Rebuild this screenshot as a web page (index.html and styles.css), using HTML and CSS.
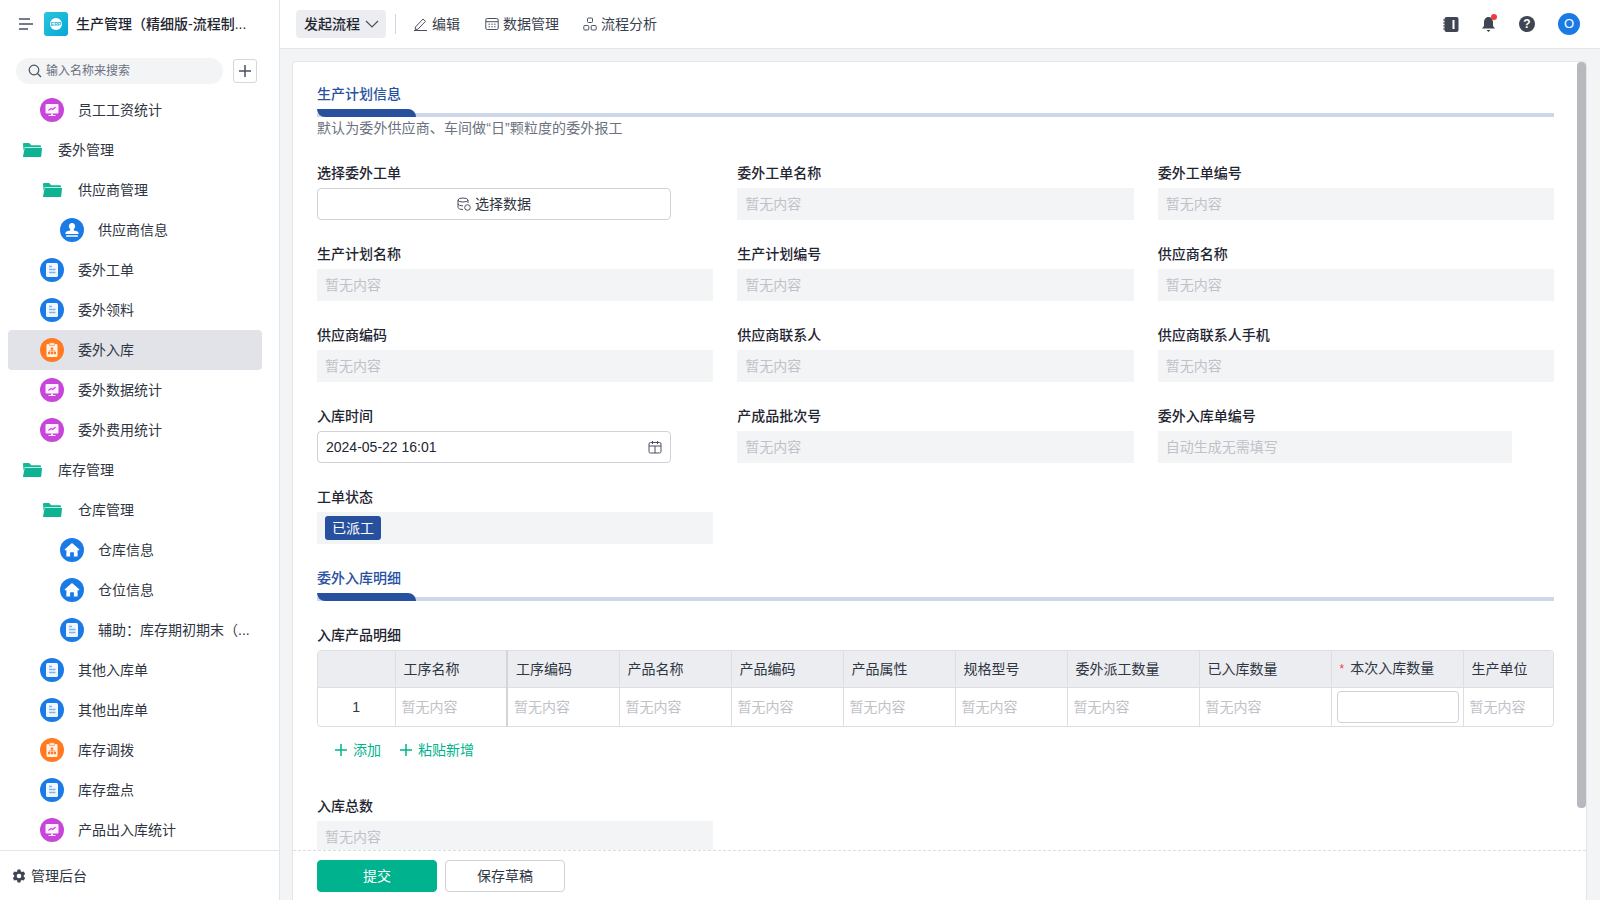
FILE: index.html
```html
<!DOCTYPE html>
<html lang="zh-CN">
<head>
<meta charset="utf-8">
<title>委外入库</title>
<link rel="stylesheet" href="styles.css">
</head>
<body>
<svg class="defs" width="0" height="0" aria-hidden="true">
  <defs>
    <symbol id="i-doc" viewBox="0 0 24 24"><circle cx="12" cy="12" r="12" fill="#1b7be6"/><rect x="6" y="5" width="12" height="14" rx="1.500" fill="#f2f7fe"/><path d="M9 8.500h3M9 11.500h6.500M9 14.500h6.500" stroke="#7fb2f1" stroke-width="1.600"/></symbol>
    <symbol id="i-chart" viewBox="0 0 24 24"><circle cx="12" cy="12" r="12" fill="#c746d9"/><rect x="5.500" y="6" width="13" height="9.500" rx="1" fill="#fbf1fd"/><path d="M8.500 12.500l2.500-2 1.600 1 3-2.500" fill="none" stroke="#c746d9" stroke-width="1.100"/><path d="M11 15.500h2v1.600h2.500v1h-7v-1H11z" fill="#fbf1fd"/></symbol>
    <symbol id="i-clip" viewBox="0 0 24 24"><circle cx="12" cy="12" r="12" fill="#ff7a21"/><rect x="6.500" y="6" width="11" height="13" rx="1.200" fill="#fff3ea"/><rect x="9.300" y="4.800" width="5.400" height="2.600" rx=".6" fill="#fff3ea" stroke="#ff7a21" stroke-width=".7"/><path d="M10.800 9.500h2.400v2.200h-2.400zM8 14h2.200v2.200H8zM10.900 14h2.200v2.200h-2.200zM13.800 14H16v2.200h-2.200z" fill="#ff7a21"/><path d="M12 11.500v2.500M9.100 14v-1.200h5.800V14" fill="none" stroke="#ff7a21" stroke-width=".7"/></symbol>
    <symbol id="i-stamp" viewBox="0 0 24 24"><circle cx="12" cy="12" r="12" fill="#1b7be6"/><path d="M12 5a3.200 3.200 0 0 1 2 5.700c-.4.400-.4 1.600.3 1.900l3.200.9c.7.200 1 .7 1 1.300V16H5.500v-1.200c0-.6.300-1.100 1-1.300l3.200-.9c.7-.3.700-1.500.3-1.900A3.200 3.200 0 0 1 12 5z" fill="#fff"/><rect x="6" y="17.200" width="12" height="1.600" rx=".5" fill="#fff"/></symbol>
    <symbol id="i-home" viewBox="0 0 24 24"><circle cx="12" cy="12" r="12" fill="#1b7be6"/><path d="M12 5l7.500 6.500-1 1.100-.9-.7V18.500h-3.700v-4.300h-3.800v4.300H6.400v-6.600l-.9.7-1-1.100z" fill="#fff"/></symbol>
    <symbol id="i-folder" viewBox="0 0 20 16"><path d="M1 2.200C1 1.500 1.500 1 2.200 1h5l2 2.200h8.600c.7 0 1.200.5 1.200 1.200V5H2.800L1.600 9z" fill="#12b897"/><path d="M2.700 5.800H19.500c.3 0 .5.200.5.500l-.8 8.200c-.1.300-.3.500-.7.500H1.500c-.4 0-.6-.3-.5-.6z" fill="#0fb392"/></symbol>
  </defs>
</svg>
<div class="app">
  <aside class="sidebar">
    <div class="brand">
      <svg class="ham" width="14" height="12" viewBox="0 0 14 12"><path d="M0 1h11M0 6h14M0 11h9" stroke="#4a5060" stroke-width="1.500"/></svg>
      <span class="logo"><span class="logo-dot">ERP</span></span>
      <span class="brand-name">生产管理（精细版-流程制...</span>
    </div>
    <div class="search-row">
      <div class="search">
        <svg width="14" height="14" viewBox="0 0 14 14"><circle cx="6" cy="6" r="4.800" fill="none" stroke="#4a5060" stroke-width="1.200"/><path d="M9.500 9.500L13 13" stroke="#4a5060" stroke-width="1.200"/></svg>
        <span>输入名称来搜索</span>
      </div>
      <span class="add-btn"><svg width="14" height="14" viewBox="0 0 14 14"><path d="M7 1v12M1 7h12" stroke="#4a5060" stroke-width="1.500"/></svg></span>
    </div>
    <nav class="tree">
      <div class="item l1"><svg class="ico"><use href="#i-chart"/></svg><span>员工工资统计</span></div>
      <div class="item l0"><svg class="fold"><use href="#i-folder"/></svg><span>委外管理</span></div>
      <div class="item l1f"><svg class="fold"><use href="#i-folder"/></svg><span>供应商管理</span></div>
      <div class="item l2"><svg class="ico"><use href="#i-stamp"/></svg><span>供应商信息</span></div>
      <div class="item l1"><svg class="ico"><use href="#i-doc"/></svg><span>委外工单</span></div>
      <div class="item l1"><svg class="ico"><use href="#i-doc"/></svg><span>委外领料</span></div>
      <div class="item l1 active"><svg class="ico"><use href="#i-clip"/></svg><span>委外入库</span></div>
      <div class="item l1"><svg class="ico"><use href="#i-chart"/></svg><span>委外数据统计</span></div>
      <div class="item l1"><svg class="ico"><use href="#i-chart"/></svg><span>委外费用统计</span></div>
      <div class="item l0"><svg class="fold"><use href="#i-folder"/></svg><span>库存管理</span></div>
      <div class="item l1f"><svg class="fold"><use href="#i-folder"/></svg><span>仓库管理</span></div>
      <div class="item l2"><svg class="ico"><use href="#i-home"/></svg><span>仓库信息</span></div>
      <div class="item l2"><svg class="ico"><use href="#i-home"/></svg><span>仓位信息</span></div>
      <div class="item l2"><svg class="ico"><use href="#i-doc"/></svg><span>辅助：库存期初期末（...</span></div>
      <div class="item l1"><svg class="ico"><use href="#i-doc"/></svg><span>其他入库单</span></div>
      <div class="item l1"><svg class="ico"><use href="#i-doc"/></svg><span>其他出库单</span></div>
      <div class="item l1"><svg class="ico"><use href="#i-clip"/></svg><span>库存调拨</span></div>
      <div class="item l1"><svg class="ico"><use href="#i-doc"/></svg><span>库存盘点</span></div>
      <div class="item l1"><svg class="ico"><use href="#i-chart"/></svg><span>产品出入库统计</span></div>
    </nav>
    <div class="admin">
      <svg width="14" height="14" viewBox="0 0 24 24"><path fill="#3f4552" fill-rule="evenodd" d="M9.500 1h5l.7 3.200 1.800 1 3.100-1 2.500 4.300-2.400 2.200v2.600l2.400 2.200-2.500 4.300-3.100-1-1.800 1-.7 3.200h-5l-.7-3.200-1.800-1-3.100 1-2.500-4.300 2.400-2.200v-2.600L1.400 8.500l2.500-4.300 3.100 1 1.800-1zM12 8a4 4 0 1 0 0 8 4 4 0 0 0 0-8z"/></svg>
      <span>管理后台</span>
    </div>
  </aside>
  <main class="main">
    <header class="topbar">
      <div class="flow-btn"><span>发起流程</span><svg width="14" height="8" viewBox="0 0 14 8"><path d="M1 1l6 6 6-6" fill="none" stroke="#4a5060" stroke-width="1.200"/></svg></div>
      <span class="vline"></span>
      <div class="tool edit"><svg width="14" height="14" viewBox="0 0 14 14"><path d="M1.500 10l7.500-8 2.500 2.300-7.600 7.900-2.700.3zM0 13.500h13" fill="none" stroke="#4a5060" stroke-width="1"/></svg><span>编辑</span></div>
      <div class="tool data"><svg width="14" height="14" viewBox="0 0 14 14"><rect x=".8" y="1.500" width="12.400" height="11" rx="1.500" fill="none" stroke="#4a5060"/><path d="M1 4.700h12M3.500 7.200h1.500M6.300 7.200h1.500M9.100 7.200h1.500M3.500 9.800h1.500M6.300 9.800h1.500M9.100 9.800h1.500" stroke="#4a5060"/></svg><span>数据管理</span></div>
      <div class="tool flow"><svg width="14" height="14" viewBox="0 0 14 14"><rect x="4.500" y="1" width="5" height="4.500" rx="1" fill="none" stroke="#4a5060"/><rect x=".8" y="8.500" width="5" height="4.500" rx="1" fill="none" stroke="#4a5060"/><rect x="8.200" y="8.500" width="5" height="4.500" rx="1" fill="none" stroke="#4a5060"/></svg><span>流程分析</span></div>
      <div class="top-right">
        <svg class="tr-note" width="16" height="15" viewBox="0 0 16 15"><rect x="1.500" width="14" height="15" rx="2" fill="#3f4552"/><rect x="9.500" y="3" width="2" height="9" fill="#fff"/><path d="M0 3h2M0 6h2M0 9h2M0 12h2" stroke="#3f4552"/></svg>
        <span class="bell"><svg width="13" height="16" viewBox="0 0 13 16"><path d="M6.500 1C9.500 1 11 3.500 11 6.500v3.500l2 2.500H0l2-2.500V6.500C2 3.500 3.500 1 6.500 1z" fill="#3f4552"/><path d="M4.500 14h4l-2 2z" fill="#3f4552"/></svg><i class="dot"></i></span>
        <span class="help">?</span>
        <span class="avatar">O</span>
      </div>
    </header>
    <div class="content">
      <section class="card">
        <div class="scroll-thumb"></div>
        <div class="form">
          <h2 class="sec-title">生产计划信息</h2>
          <div class="bar"><span class="bar-accent"></span></div>
          <p class="desc">默认为委外供应商、车间做“日”颗粒度的委外报工</p>
          <div class="grid">
            <div class="field"><label>选择委外工单</label><div class="pick"><svg width="14" height="14" viewBox="0 0 14 14"><ellipse cx="6" cy="3" rx="5" ry="2" fill="none" stroke="#4a5060"/><path d="M1 3v7.500c0 1 2 2 5 2M11 3v3M1 6.800c0 1 2 2 5 2" fill="none" stroke="#4a5060"/><circle cx="10.500" cy="10.500" r="2.800" fill="none" stroke="#4a5060"/></svg><span>选择数据</span></div></div>
            <div class="field"><label>委外工单名称</label><div class="ro">暂无内容</div></div>
            <div class="field"><label>委外工单编号</label><div class="ro">暂无内容</div></div>
            <div class="field"><label>生产计划名称</label><div class="ro">暂无内容</div></div>
            <div class="field"><label>生产计划编号</label><div class="ro">暂无内容</div></div>
            <div class="field"><label>供应商名称</label><div class="ro">暂无内容</div></div>
            <div class="field"><label>供应商编码</label><div class="ro">暂无内容</div></div>
            <div class="field"><label>供应商联系人</label><div class="ro">暂无内容</div></div>
            <div class="field"><label>供应商联系人手机</label><div class="ro">暂无内容</div></div>
            <div class="field"><label>入库时间</label><div class="date"><span>2024-05-22 16:01</span><svg width="14" height="14" viewBox="0 0 14 14"><rect x="1" y="2.500" width="12" height="10.500" rx="1.500" fill="none" stroke="#4a5060"/><path d="M1 6h12M4.500 1v3M9.500 1v3M7 6v7" stroke="#4a5060"/></svg></div></div>
            <div class="field"><label>产成品批次号</label><div class="ro">暂无内容</div></div>
            <div class="field"><label>委外入库单编号</label><div class="ro short">自动生成无需填写</div></div>
            <div class="field"><label>工单状态</label><div class="ro tagbox"><span class="tag">已派工</span></div></div>
          </div>
          <h2 class="sec-title second">委外入库明细</h2>
          <div class="bar"><span class="bar-accent"></span></div>
          <label class="tbl-label">入库产品明细</label>
          <div class="tbl-wrap">
            <table class="tbl">
              <colgroup>
                <col class="c-idx"><col class="c-m"><col class="c-m"><col class="c-m"><col class="c-m"><col class="c-m"><col class="c-m"><col class="c-l"><col class="c-l"><col class="c-l"><col class="c-s">
              </colgroup>
              <thead>
                <tr><th></th><th class="thick">工序名称</th><th>工序编码</th><th>产品名称</th><th>产品编码</th><th>产品属性</th><th>规格型号</th><th>委外派工数量</th><th>已入库数量</th><th><em>*</em>本次入库数量</th><th>生产单位</th></tr>
              </thead>
              <tbody>
                <tr><td class="idx">1</td><td class="thick">暂无内容</td><td>暂无内容</td><td>暂无内容</td><td>暂无内容</td><td>暂无内容</td><td>暂无内容</td><td>暂无内容</td><td>暂无内容</td><td class="inp"><span class="cell-input"></span></td><td>暂无内容</td></tr>
              </tbody>
            </table>
          </div>
          <div class="actions">
            <span class="act"><svg width="12" height="12" viewBox="0 0 12 12"><path d="M6 0v12M0 6h12" stroke="#00b38e" stroke-width="1.500"/></svg>添加</span>
            <span class="act"><svg width="12" height="12" viewBox="0 0 12 12"><path d="M6 0v12M0 6h12" stroke="#00b38e" stroke-width="1.500"/></svg>粘贴新增</span>
          </div>
          <div class="field total"><label>入库总数</label><div class="ro">暂无内容</div></div>
        </div>
        <footer class="foot">
          <span class="btn primary">提交</span>
          <span class="btn">保存草稿</span>
        </footer>
      </section>
    </div>
  </main>
</div>
</body>
</html>
```

FILE: styles.css
```css
* { box-sizing: border-box; }
html, body { margin: 0; height: 100%; overflow: hidden; }
body {
  font-family: "Liberation Sans", "Noto Sans CJK SC", sans-serif;
  font-size: 14px;
  line-height: 22px;
  color: #2a303c;
  background: #f3f4f6;
}
.defs { position: absolute; }
.app { display: flex; height: 900px; }

/* sidebar */
.sidebar {
  width: 280px;
  flex: none;
  display: flex;
  flex-direction: column;
  background: #fff;
  border-right: 1px solid #e3e5e9;
}
.brand { height: 48px; display: flex; align-items: center; padding-left: 19px; flex: none; }
.ham { flex: none; }
.logo {
  width: 24px; height: 24px; margin-left: 11px; border-radius: 3px;
  background: linear-gradient(135deg, #2ac4dc, #05a8d8);
  display: flex; align-items: center; justify-content: center; flex: none;
}
.logo-dot {
  width: 12px; height: 12px; border-radius: 50%; background: #fff; color: #14b2d8;
  font-size: 5px; line-height: 12px; text-align: center; font-weight: 700;
}
.brand-name { margin-left: 8px; font-weight: 500; color: #1f2531; white-space: nowrap; }
.search-row { display: flex; align-items: center; padding: 4px 0 0 16px; height: 42px; flex: none; }
.search {
  width: 207px; height: 26px; border-radius: 13px; background: #f3f4f6;
  display: flex; align-items: center; gap: 4px; padding-left: 12px;
  font-size: 12px; color: #6b7180;
}
.add-btn {
  width: 24px; height: 24px; margin-left: 10px; border: 1px solid #d5d7dc; border-radius: 3px;
  display: flex; align-items: center; justify-content: center;
}
.tree { flex: 1; overflow: hidden; }
.item { height: 40px; display: flex; align-items: center; color: #2f3542; white-space: nowrap; }
.ico { width: 24px; height: 24px; flex: none; margin-right: 14px; }
.fold { width: 20px; height: 16px; flex: none; margin-right: 16px; }
.l0 { padding-left: 22px; }
.l1f { padding-left: 42px; }
.l1 { padding-left: 40px; }
.l2 { padding-left: 60px; }
.active { margin: 0 17px 0 8px; padding-left: 32px; background: #e1e3e8; border-radius: 4px; }
.admin {
  height: 50px; flex: none; border-top: 1px solid #e3e5e9;
  display: flex; align-items: center; gap: 5px; padding: 0 0 0 12px; color: #2f3542;
}

/* main */
.main { flex: 1; min-width: 0; display: flex; flex-direction: column; }
.topbar {
  height: 49px; flex: none; background: #fff; border-bottom: 1px solid #e3e5e9;
  display: flex; align-items: center; padding-left: 16px;
}
.flow-btn {
  width: 90px; height: 28px; background: #ebedf0; border-radius: 4px;
  display: flex; align-items: center; gap: 5px; padding-left: 8px;
  font-weight: 500; color: #1f2531;
}
.vline { width: 1px; height: 20px; background: #d5d7dc; margin: 0 18px 0 9px; }
.tool { display: flex; align-items: center; gap: 4px; color: #3a404d; }
.edit { margin-right: 25px; }
.data { margin-right: 24px; }
.top-right { margin-left: auto; display: flex; align-items: center; padding-right: 20px; }
.bell { position: relative; display: flex; margin-left: 23px; }
.dot { position: absolute; top: -2px; right: -2px; width: 6px; height: 6px; border-radius: 50%; background: #ef3b3b; }
.help {
  width: 16px; height: 16px; margin-left: 24px; border-radius: 50%; background: #3f4552; color: #fff;
  font-size: 12px; font-weight: 700; line-height: 16px; text-align: center;
}
.avatar {
  width: 22px; height: 22px; margin-left: 23px; border-radius: 50%; background: #1b7be6; color: #fff;
  font-size: 13px; line-height: 22px; text-align: center;
}

/* card */
.content { flex: 1; min-height: 0; padding: 12px 13px 0 12px; display: flex; }
.card {
  position: relative; flex: 1; min-width: 0; background: #fff;
  border: 1px solid #e3e5e9; border-bottom: 0; border-radius: 4px 4px 0 0;
  display: flex; flex-direction: column; overflow: hidden;
}
.scroll-thumb {
  position: absolute; top: 0; right: 0; width: 9px; height: 746px;
  background: #b8b9be; border-radius: 4px;
}
.form { flex: 1; min-height: 0; overflow: hidden; padding: 21px 32px 0 24px; }
.sec-title { margin: 0; font-size: 14px; font-weight: 500; color: #27519f; line-height: 22px; }
.sec-title.second { margin-top: 23px; }
.bar {
  height: 8px; margin-top: 4px; display: block;
  background: linear-gradient(transparent 4px, #cdd7ea 4px);
}
.bar-accent { display: block; width: 99px; height: 8px; background: #27519f; border-radius: 0 8px 0 8px; }
.desc { margin: 0; color: #6b7280; letter-spacing: .1px; }
.grid { display: grid; grid-template-columns: repeat(3, 1fr); column-gap: 24px; row-gap: 23px; margin-top: 23px; }
.field { min-width: 0; }
.field label, .tbl-label { display: block; font-weight: 500; color: #1f2531; margin-bottom: 4px; }
.ro { height: 32px; background: #f3f4f6; color: #c0c2c8; line-height: 32px; padding-left: 8px; }
.short { width: 354px; }
.pick, .date {
  width: 354px; height: 32px; border: 1px solid #d0d2d7; border-radius: 4px; background: #fff;
  display: flex; align-items: center;
}
.pick { justify-content: center; gap: 4px; color: #2f3542; }
.date { justify-content: space-between; padding: 0 8px; color: #1f2531; }
.tagbox { display: flex; align-items: center; }
.tag { height: 24px; width: 56px; background: #27519f; color: #fff; border-radius: 3px; line-height: 24px; text-align: center; }
.tbl-label { margin: 23px 0 4px; }
.tbl-wrap { border: 1px solid #dcdee3; border-radius: 4px; overflow: hidden; height: 77px; }
.tbl { border-collapse: collapse; table-layout: fixed; width: 1247px; }
.c-idx { width: 77px; }
.c-m { width: 112px; }
.c-l { width: 132px; }
.c-s { width: 120px; }
.tbl th {
  height: 36px; padding: 0 8px; background: #ecedf1; text-align: left; font-weight: 400; color: #2f3542;
  border-right: 1px solid #dcdee3; border-bottom: 1px solid #dcdee3; white-space: nowrap;
}
.tbl td { height: 39px; padding: 0 6px; color: #c0c2c8; border-right: 1px solid #dcdee3; white-space: nowrap; }
.tbl .thick { border-right: 2px solid #d3d5da; }
.tbl td.idx { text-align: center; color: #2f3542; }
.tbl td.inp { padding: 0 5px; }
.tbl em { color: #ef4444; font-style: normal; font-size: 12px; margin-right: 6px; }
.cell-input { display: block; width: 122px; height: 32px; border: 1px solid #d0d2d7; border-radius: 4px; background: #fff; }
.actions { display: flex; height: 22px; margin-top: 12px; padding-left: 18px; gap: 19px; color: #00b38e; }
.act { display: flex; align-items: center; gap: 6px; }
.total { margin-top: 34px; width: 396px; }
.foot {
  height: 50px; flex: none; border-top: 1px dashed #dcdee3; background: #fff;
  display: flex; align-items: flex-start; gap: 8px; padding: 9px 0 0 24px;
}
.btn {
  width: 120px; height: 32px; border: 1px solid #d0d2d7; border-radius: 4px; background: #fff;
  text-align: center; line-height: 30px; color: #2f3542;
}
.primary { background: #00b38e; border-color: #00b38e; color: #fff; }
```
